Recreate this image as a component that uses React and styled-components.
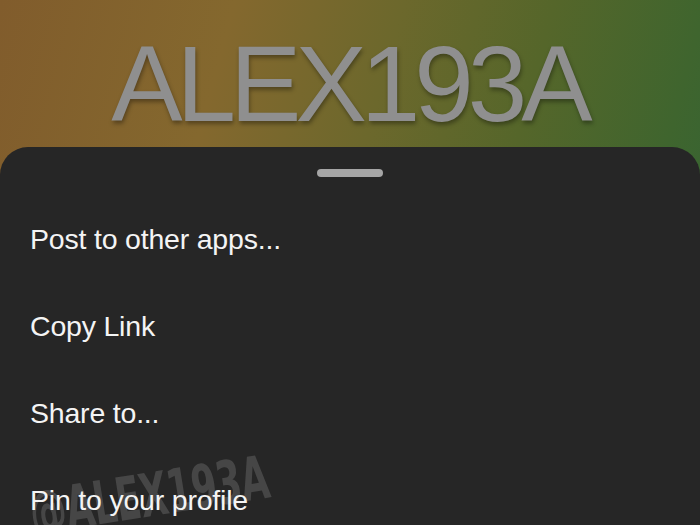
import React from "react";
import styled, { createGlobalStyle } from "styled-components";

const Global = createGlobalStyle`
  html, body { margin: 0; padding: 0; }
  body { width: 700px; height: 525px; overflow: hidden; background: #262626; }
  #root { width: 700px; height: 525px; }
`;

const Screen = styled.div`
  position: relative;
  width: 700px;
  height: 525px;
  overflow: hidden;
  display: flex;
  flex-direction: column;
  background: linear-gradient(105deg, #815c2c 0%, #84682e 28%, #6c682c 48%, #55662a 66%, #3f652e 84%, #2f6338 100%);
  font-family: "Liberation Sans", Arial, sans-serif;
`;

const Header = styled.div`
  height: 147px;
  flex: none;
  display: flex;
  justify-content: center;
  align-items: flex-start;
`;

const Title = styled.h1`
  margin: 31px 0 0 0;
  font-family: "Liberation Sans", Arial, sans-serif;
  font-weight: 400;
  font-size: 107px;
  line-height: 1;
  letter-spacing: -6px;
  color: #8f8f8f;
  text-shadow: 1px 3px 4px rgba(0, 0, 0, 0.35);
  padding-right: 2px;
`;

const Sheet = styled.div`
  flex: 1;
  background: #262626;
  border-radius: 28px 28px 0 0;
  display: flex;
  flex-direction: column;
  padding-top: 22px;
`;

const Handle = styled.div`
  align-self: center;
  width: 66px;
  height: 8px;
  border-radius: 4px;
  background: #a6a6a6;
`;

const Menu = styled.ul`
  list-style: none;
  margin: 46px 0 0 0;
  padding: 0 0 0 30px;
  display: flex;
  flex-direction: column;
`;

const Item = styled.li`
  height: 87px;
  font-size: 28.5px;
  line-height: 32px;
  color: #f4f4f4;
  letter-spacing: -0.2px;
  position: relative;
  z-index: 1;
`;

const Watermark = styled.div`
  position: absolute;
  left: 30px;
  top: 484px;
  font-family: "Liberation Sans Narrow", "DejaVu Sans Condensed", "Liberation Sans", sans-serif;
  font-weight: 700;
  font-size: 60px;
  line-height: 1;
  color: #464646;
  transform: rotate(-9deg) scaleX(0.68);
  transform-origin: left center;
  white-space: nowrap;
  letter-spacing: -1px;
  z-index: 0;
`;

const items = ["Post to other apps...", "Copy Link", "Share to...", "Pin to your profile"];

export default function App() {
  return (
    <>
      <Global />
      <Screen>
        <Header>
          <Title>ALEX193A</Title>
        </Header>
        <Sheet>
          <Handle />
          <Menu>
            {items.map((t) => (
              <Item key={t}>{t}</Item>
            ))}
          </Menu>
        </Sheet>
        <Watermark>@ALEX193A</Watermark>
      </Screen>
    </>
  );
}
